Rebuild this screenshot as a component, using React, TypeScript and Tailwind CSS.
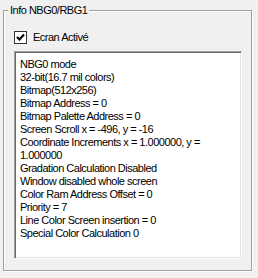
const LINES = [
  'NBG0 mode',
  '32-bit(16.7 mil colors)',
  'Bitmap(512x256)',
  'Bitmap Address = 0',
  'Bitmap Palette Address = 0',
  'Screen Scroll x = -496, y = -16',
  'Coordinate Increments x = 1.000000, y =',
  '1.000000',
  'Gradation Calculation Disabled',
  'Window disabled whole screen',
  'Color Ram Address Offset = 0',
  'Priority = 7',
  'Line Color Screen insertion = 0',
  'Special Color Calculation 0',
]

export default function App() {
  return (
    <div
      className="h-[278px] w-[258px] bg-[#f0f0f0] pl-[3px] pt-[10px] text-[11px] tracking-[-0.5px] text-black"
      style={{ fontFamily: '"Liberation Sans", Arial, sans-serif' }}
    >
      <div className="relative h-[261px] w-[249px] border border-[#a0a0a0] shadow-[1px_1px_0_#fff,inset_1px_1px_0_#fff]">
        <span className="absolute -top-[7px] left-[4px] bg-[#f0f0f0] px-[2px] leading-[13px]">
          Info NBG0/RBG1
        </span>

        <div className="flex flex-col pl-[10px] pt-[20px]">
          <label className="flex h-[13px] items-center gap-[6px] leading-[13px]">
            <span className="grid size-[13px] place-items-center border border-[#333] bg-white">
              <svg width="9" height="9" viewBox="0 0 9 9">
                <path d="M1 4 L3.5 6.5 L8 1.5" fill="none" stroke="#000" strokeWidth="2.2" />
              </svg>
            </span>
            Ecran Activé
          </label>

          <div className="mt-[7px] h-[208px] w-[228px] border border-b-white border-l-[#a0a0a0] border-r-white border-t-[#a0a0a0] bg-white shadow-[inset_1px_1px_0_#696969,inset_-1px_-1px_0_#e3e3e3]">
            <ul className="pl-[5px] pt-[6px] leading-[13px]">
              {LINES.map((line, i) => (
                <li key={i} className="whitespace-nowrap">
                  {line}
                </li>
              ))}
            </ul>
          </div>
        </div>
      </div>
    </div>
  )
}
